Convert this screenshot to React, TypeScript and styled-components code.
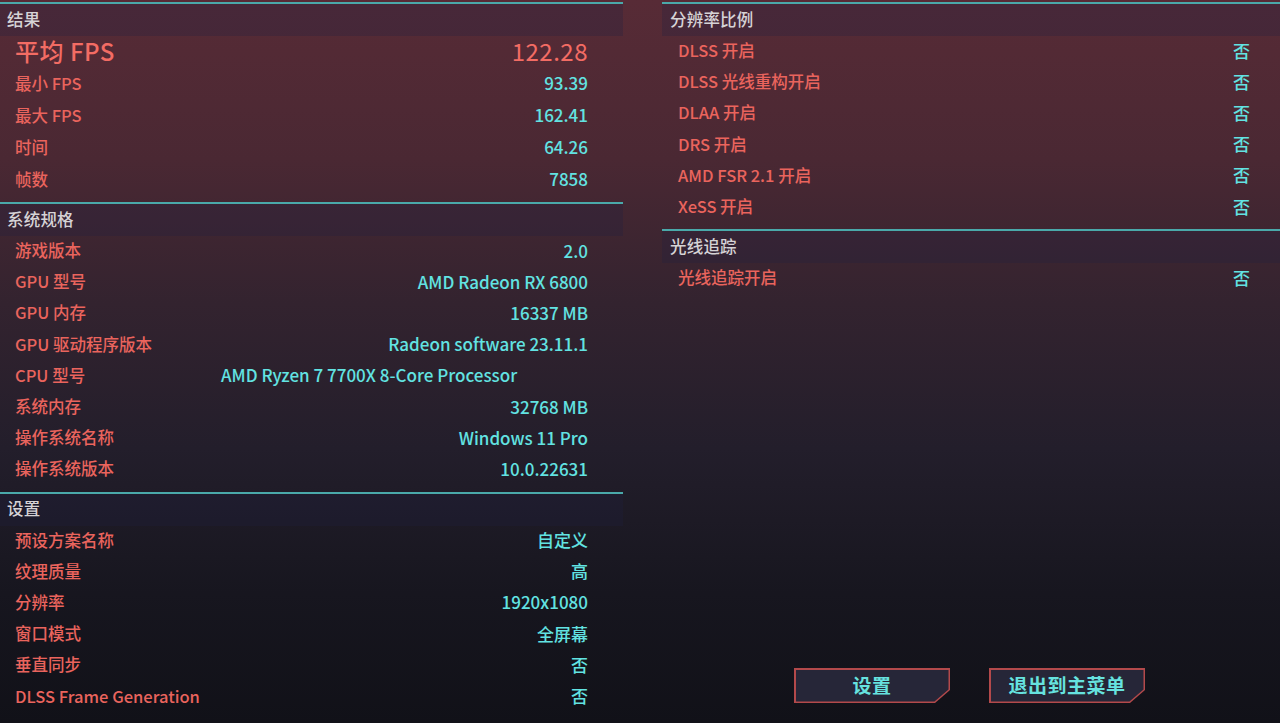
import styled, { createGlobalStyle } from 'styled-components';

interface Item {
  label: string;
  value: string;
  left?: boolean;
}

const results: Item[] = [
  { label: '最小 FPS', value: '93.39' },
  { label: '最大 FPS', value: '162.41' },
  { label: '时间', value: '64.26' },
  { label: '帧数', value: '7858' },
];

const specs: Item[] = [
  { label: '游戏版本', value: '2.0' },
  { label: 'GPU 型号', value: 'AMD Radeon RX 6800' },
  { label: 'GPU 内存', value: '16337 MB' },
  { label: 'GPU 驱动程序版本', value: 'Radeon software 23.11.1' },
  { label: 'CPU 型号', value: 'AMD Ryzen 7 7700X 8-Core Processor', left: true },
  { label: '系统内存', value: '32768 MB' },
  { label: '操作系统名称', value: 'Windows 11 Pro' },
  { label: '操作系统版本', value: '10.0.22631' },
];

const settings: Item[] = [
  { label: '预设方案名称', value: '自定义' },
  { label: '纹理质量', value: '高' },
  { label: '分辨率', value: '1920x1080' },
  { label: '窗口模式', value: '全屏幕' },
  { label: '垂直同步', value: '否' },
  { label: 'DLSS Frame Generation', value: '否' },
];

const scaling: Item[] = [
  { label: 'DLSS 开启', value: '否' },
  { label: 'DLSS 光线重构开启', value: '否' },
  { label: 'DLAA 开启', value: '否' },
  { label: 'DRS 开启', value: '否' },
  { label: 'AMD FSR 2.1 开启', value: '否' },
  { label: 'XeSS 开启', value: '否' },
];

const rayTracing: Item[] = [{ label: '光线追踪开启', value: '否' }];

type Side = 'left' | 'right';

const GlobalStyle = createGlobalStyle`
  html, body {
    margin: 0;
    padding: 0;
    height: 100%;
  }
  body {
    background: linear-gradient(180deg, #572b36 0%, #4a2833 22%, #33232f 42%, #231e2b 62%, #17161f 82%, #111118 100%);
    font-family: "Noto Sans CJK SC", "Noto Sans", sans-serif;
    overflow: hidden;
  }
  #root {
    height: 100%;
  }
`;

function Rows({ items, rowHeight, side }: { items: Item[]; rowHeight: number; side: Side }) {
  return (
    <>
      {items.map((item) => (
        <Row key={item.label} $height={rowHeight} $side={side}>
          <Label>{item.label}</Label>
          <Value $left={item.left}>{item.value}</Value>
        </Row>
      ))}
    </>
  );
}

export default function App() {
  return (
    <>
      <GlobalStyle />
      <Page>
        <LeftColumn>
          <Section>
            <SectionHeader $side="left">结果</SectionHeader>
            <Row $height={32} $side="left">
              <BigText>平均 FPS</BigText>
              <BigValue>122.28</BigValue>
            </Row>
            <Rows items={results} rowHeight={32} side="left" />
          </Section>
          <Section>
            <SectionHeader $side="left">系统规格</SectionHeader>
            <Rows items={specs} rowHeight={31.2} side="left" />
          </Section>
          <Section>
            <SectionHeader $side="left">设置</SectionHeader>
            <Rows items={settings} rowHeight={31.2} side="left" />
          </Section>
        </LeftColumn>

        <RightColumn>
          <Section>
            <SectionHeader $side="right">分辨率比例</SectionHeader>
            <Rows items={scaling} rowHeight={31.2} side="right" />
          </Section>
          <Section>
            <SectionHeader $side="right">光线追踪</SectionHeader>
            <Rows items={rayTracing} rowHeight={31.2} side="right" />
          </Section>

          <ButtonBar>
            <MenuButton>
              <ButtonFace>设置</ButtonFace>
            </MenuButton>
            <MenuButton>
              <ButtonFace>退出到主菜单</ButtonFace>
            </MenuButton>
          </ButtonBar>
        </RightColumn>
      </Page>
    </>
  );
}

const Page = styled.div`
  display: flex;
  gap: 39px;
  height: 100%;
  padding-top: 2px;
  box-sizing: border-box;
`;

const LeftColumn = styled.div`
  width: 623px;
  flex-shrink: 0;
  display: flex;
  flex-direction: column;
`;

const RightColumn = styled.div`
  flex: 1;
  display: flex;
  flex-direction: column;
`;

const Section = styled.section`
  border-top: 2px solid #4aa9aa;
  margin-bottom: 6px;
`;

const SectionHeader = styled.div<{ $side: Side }>`
  height: 32px;
  box-sizing: border-box;
  padding-bottom: 3px;
  display: flex;
  align-items: center;
  padding-left: ${(p) => (p.$side === 'left' ? 7 : 8)}px;
  background: rgba(34, 34, 66, 0.28);
  color: #d6d3d6;
  font-size: 16.5px;
  font-weight: 500;
  letter-spacing: 0.2px;
`;

const Row = styled.div<{ $height: number; $side: Side }>`
  height: ${(p) => p.$height}px;
  box-sizing: border-box;
  padding-bottom: 3px;
  display: grid;
  grid-template-columns: 206px 1fr;
  align-items: center;
  padding-left: ${(p) => (p.$side === 'left' ? 15 : 16)}px;
  padding-right: ${(p) => (p.$side === 'left' ? 35 : 30)}px;
`;

const Label = styled.span`
  color: #ea645d;
  font-size: 16.5px;
  font-weight: 500;
  white-space: nowrap;
`;

const Value = styled.span<{ $left?: boolean }>`
  color: #62e3e2;
  font-size: 17px;
  font-weight: 500;
  white-space: nowrap;
  justify-self: ${(p) => (p.$left ? 'start' : 'end')};
`;

const BigText = styled.span`
  color: #f36c64;
  font-size: 24px;
  line-height: 26px;
  font-weight: 500;
  letter-spacing: 0.5px;
  white-space: nowrap;
`;

const BigValue = styled(BigText)`
  justify-self: end;
  font-weight: 400;
`;

const ButtonBar = styled.div`
  margin-top: auto;
  display: flex;
  justify-content: center;
  gap: 39px;
  padding-bottom: 20px;
  padding-right: 3px;
`;

const MenuButton = styled.div`
  width: 156px;
  height: 35px;
  padding: 1.5px;
  box-sizing: border-box;
  background: #b3494b;
  clip-path: polygon(0 0, 100% 0, 100% calc(100% - 13px), calc(100% - 15px) 100%, 0 100%);
  cursor: pointer;
`;

const ButtonFace = styled.div`
  height: 100%;
  display: flex;
  align-items: center;
  justify-content: center;
  padding-bottom: 2px;
  box-sizing: border-box;
  background: #262638;
  clip-path: polygon(0 0, 100% 0, 100% calc(100% - 12px), calc(100% - 14px) 100%, 0 100%);
  color: #66e2df;
  font-size: 19px;
  font-weight: 700;
  letter-spacing: 0.5px;
`;
